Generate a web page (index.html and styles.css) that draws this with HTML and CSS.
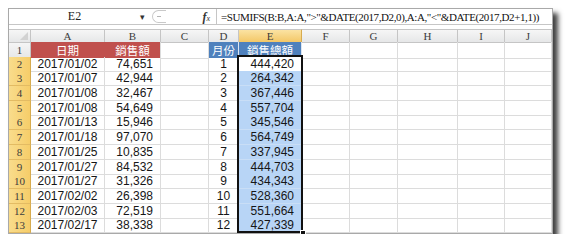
FILE: index.html
```html
<!DOCTYPE html>
<html lang="zh-Hant">
<head>
    <meta charset="UTF-8">
    <title>SUMIFS 月份銷售總額</title>
    <link rel="stylesheet" href="styles.css">
</head>
<body>
    <div class="window">
        <!-- Formula bar -->
        <div class="formula-bar">
            <div class="name-box">
                <span class="name">E2</span>
                <span class="drop">▾</span>
            </div>
            <div class="grip"><span class="grip-dot"></span></div>
            <div class="fx"><i>f</i><sub>x</sub></div>
            <div class="formula">=SUMIFS(B:B,A:A,"&gt;"&amp;DATE(2017,D2,0),A:A,"&lt;"&amp;DATE(2017,D2+1,1))</div>
        </div>

        <!-- Sheet -->
        <div class="sheet" id="sheet">
            <div class="row col-head">
                <div class="corner"></div>
                <div class="ch">A</div>
                <div class="ch">B</div>
                <div class="ch">C</div>
                <div class="ch">D</div>
                <div class="ch ch-sel">E</div>
                <div class="ch">F</div>
                <div class="ch">G</div>
                <div class="ch">H</div>
                <div class="ch">I</div>
                <div class="ch">J</div>
            </div>
            <div class="row">
                <div class="rh">1</div>
                <div class="c red">日期</div>
                <div class="c red">銷售額</div>
                <div class="c"></div>
                <div class="c blue">月份</div>
                <div class="c blue">銷售總額</div>
                <div class="c"></div>
                <div class="c"></div>
                <div class="c"></div>
                <div class="c"></div>
                <div class="c"></div>
            </div>
            <div class="selection"><span class="handle"></span></div>
        </div>
    </div>

    <script>
        const dates = ['2017/01/02', '2017/01/07', '2017/01/08', '2017/01/08', '2017/01/13', '2017/01/18',
                       '2017/01/25', '2017/01/27', '2017/01/27', '2017/02/02', '2017/02/03', '2017/02/17'];
        const sales = ['74,651', '42,944', '32,467', '54,649', '15,946', '97,070',
                       '10,835', '84,532', '31,326', '26,398', '72,519', '38,338'];
        const totals = ['444,420', '264,342', '367,446', '557,704', '345,546', '564,749',
                        '337,945', '444,703', '434,343', '528,360', '551,664', '427,339'];

        const sheet = document.getElementById('sheet');
        const selection = sheet.querySelector('.selection');

        dates.forEach((date, i) => {
            const row = document.createElement('div');
            row.className = 'row';
            const totalClass = i === 0 ? 'c num active' : 'c num picked';
            row.innerHTML =
                '<div class="rh rh-sel">' + (i + 2) + '</div>' +
                '<div class="c mid">' + date + '</div>' +
                '<div class="c num">' + sales[i] + '</div>' +
                '<div class="c"></div>' +
                '<div class="c mid">' + (i + 1) + '</div>' +
                '<div class="' + totalClass + '">' + totals[i] + '</div>' +
                '<div class="c"></div><div class="c"></div><div class="c"></div>' +
                '<div class="c"></div><div class="c"></div>';
            sheet.insertBefore(row, selection);
        });
    </script>
</body>
</html>
```

FILE: styles.css
```css
* {
    margin: 0;
    padding: 0;
    box-sizing: border-box;
}

body {
    background-color: #fff;
    font-family: "Liberation Sans", Arial, sans-serif;
}

.window {
    width: 545px;
    margin: 8px 0 0 8px;
    background-color: #fff;
    border: 1px solid #a9a9a9;
    box-shadow: 5px 5px 5px rgba(0,0,0,0.75);
}

/* Formula bar */
.formula-bar {
    height: 16px;
    display: flex;
    align-items: center;
    border-bottom: 1px solid #c6c6c6;
    font-family: "Liberation Serif", "Times New Roman", serif;
    font-size: 12px;
    color: #222;
    overflow: hidden;
}

.name-box {
    flex-shrink: 0;
    width: 143px;
    display: flex;
    align-items: center;
}

.name {
    flex-grow: 1;
    text-align: center;
}

.drop {
    font-size: 9px;
    color: #333;
    width: 12px;
}

.grip {
    flex-shrink: 0;
    width: 14px;
    height: 13px;
    border: 1px solid #c9c9c9;
    border-right: none;
    border-radius: 7px 0 0 7px;
    display: flex;
    align-items: center;
    padding-left: 4px;
}

.grip-dot {
    width: 4px;
    height: 2px;
    border-top: 1px solid #b5b5b5;
}

.fx {
    flex-shrink: 0;
    width: 51px;
    text-align: right;
    padding-right: 6px;
    font-size: 12px;
    color: #333;
    border-right: 1px solid #c6c6c6;
    height: 100%;
    line-height: 16px;
}

.fx i {
    font-weight: bold;
}

.fx sub {
    font-size: 8px;
    vertical-align: 0;
    font-style: italic;
}

.formula {
    padding-left: 4px;
    white-space: nowrap;
    font-size: 11px;
    letter-spacing: -0.4px;
    color: #111;
}

/* Sheet grid */
.sheet {
    position: relative;
    margin-top: 4px;
}

.row {
    display: grid;
    grid-template-columns: 22px 74px 56px 48px 30px 63px 48px 48px 60px 47px 47px;
    height: 14.7px;
}

.col-head {
    height: 13px;
}

.corner,
.ch,
.rh {
    background: linear-gradient(#f6f6f6, #e6e7e8);
    border-right: 1px solid #c5c5c5;
    border-bottom: 1px solid #c5c5c5;
    font-family: "Liberation Serif", "Times New Roman", serif;
    font-size: 11px;
    color: #3c3c3c;
    display: flex;
    align-items: center;
    justify-content: center;
}

.col-head > div {
    border-top: 1px solid #c5c5c5;
}

.corner {
    position: relative;
}

.corner::after {
    content: "";
    position: absolute;
    right: 2px;
    bottom: 2px;
    border-left: 8px solid transparent;
    border-bottom: 8px solid #d2d2d2;
}

.ch-sel {
    background: linear-gradient(#fbe3a3, #f3c767);
    border-color: #d7ab4f;
}

.rh-sel {
    background: linear-gradient(90deg, #f9dc8c, #f6cd69);
    border-right-color: #d7ab4f;
    border-bottom-color: #e3bb63;
}

.c {
    border-right: 1px solid #dcdcdc;
    border-bottom: 1px solid #dcdcdc;
    font-size: 12px;
    color: #161616;
    display: flex;
    align-items: center;
    white-space: nowrap;
}

.mid {
    justify-content: center;
}

.num {
    justify-content: flex-end;
    padding-right: 7px;
}

.red,
.blue {
    justify-content: center;
    color: #fff;
    font-family: "Noto Sans CJK TC", sans-serif;
    font-size: 11.5px;
    border-bottom-color: #fff;
}

.red {
    background-color: #c0504d;
    border-right-color: #c0504d;
}

.red + .red {
    border-right-color: #dcdcdc;
}

.blue {
    background-color: #4f81bd;
    border-right-color: #dbe5f1;
}

.picked {
    background-color: #b8d5f6;
    border-bottom-color: #c9def6;
}

.active {
    background-color: #fff;
}

/* Selected range E2:E13 */
.selection {
    position: absolute;
    left: 228px;
    top: 26px;
    width: 66px;
    height: 178px;
    border: 2px solid #111;
    pointer-events: none;
}

.handle {
    position: absolute;
    right: -5px;
    bottom: -5px;
    width: 6px;
    height: 6px;
    background-color: #111;
    border: 1px solid #fff;
}
```
